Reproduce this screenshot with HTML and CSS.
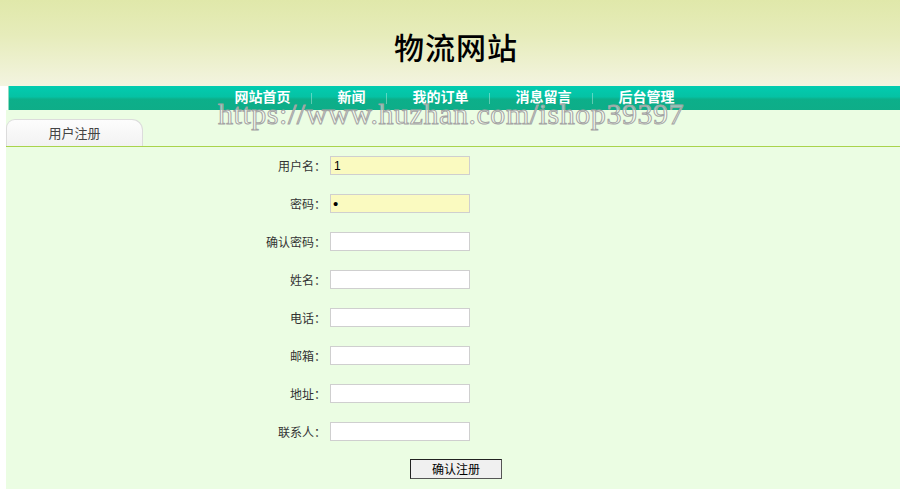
FILE: index.html
```html
<!DOCTYPE html>
<html lang="zh-CN">
<head>
    <meta charset="UTF-8">
    <title>物流网站 - 用户注册</title>
    <link rel="stylesheet" href="styles.css">
</head>
<body>
    <div class="header">
        <h1 class="site-title">物流网站</h1>
    </div>

    <div class="nav">
        <a href="#">网站首页</a>
        <span class="sep"></span>
        <a href="#">新闻</a>
        <span class="sep"></span>
        <a href="#">我的订单</a>
        <span class="sep"></span>
        <a href="#">消息留言</a>
        <span class="sep"></span>
        <a href="#">后台管理</a>
    </div>

    <div class="main">
        <div class="tab-bar">
            <div class="tab">用户注册</div>
        </div>

        <form class="reg-form">
            <label>用户名：</label>
            <input type="text" class="filled" value="1">
            <label>密码：</label>
            <input type="password" class="filled" value="1">
            <label>确认密码：</label>
            <input type="password">
            <label>姓名：</label>
            <input type="text">
            <label>电话：</label>
            <input type="text">
            <label>邮箱：</label>
            <input type="text">
            <label>地址：</label>
            <input type="text">
            <label>联系人：</label>
            <input type="text">
            <span></span>
            <button type="button" class="submit-btn">确认注册</button>
        </form>
    </div>

    <div class="watermark">https://www.huzhan.com/ishop39397</div>
</body>
</html>
```

FILE: styles.css
```css
body {
    margin: 0;
    padding: 0;
    background: #fff;
    font-family: "Noto Sans CJK SC", "Liberation Sans", sans-serif;
    font-size: 12px;
    color: #333;
    height: 489px;
    overflow: hidden;
    display: flex;
    flex-direction: column;
}

.header {
    height: 86px;
    background: linear-gradient(180deg, #e0e8aa 0%, #e6ecba 40%, #f3f4e0 100%);
    display: flex;
    align-items: center;
    justify-content: center;
}
.site-title {
    margin: 6px 0 0 12px;
    font-size: 30px;
    font-weight: 500;
    color: #000;
    letter-spacing: 1px;
}

.nav {
    margin-left: 8px;
    height: 24px;
    background: linear-gradient(180deg, #02ccb0 0%, #05c2a4 45%, #0caf8a 55%, #0ead88 100%);
    border-left: 1px solid #8fdcc0;
    display: flex;
    align-items: center;
    justify-content: center;
}
.nav a {
    color: #fff;
    font-size: 14px;
    font-weight: bold;
    text-decoration: none;
    line-height: 24px;
    margin-top: -4px;
}
.nav .sep {
    width: 1px;
    height: 11px;
    background: rgba(255, 255, 255, 0.35);
    margin: 0 26px 0 20px;
}

.main {
    flex: 1;
    margin-left: 6px;
    background: #ebfde3;
    padding-top: 9px;
}
.tab-bar {
    border-bottom: 1px solid #a9d44c;
    display: flex;
}
.tab {
    width: 135px;
    height: 26px;
    line-height: 26px;
    text-align: center;
    font-size: 13px;
    color: #444;
    background: linear-gradient(180deg, #fdfdfd 0%, #f2f2f2 100%);
    border: 1px solid #dcdcdc;
    border-bottom: none;
    border-radius: 9px 11px 0 0;
}

.reg-form {
    display: grid;
    grid-template-columns: 320px 140px;
    column-gap: 4px;
    row-gap: 19px;
    padding-top: 9px;
}
.reg-form label {
    text-align: right;
    line-height: 19px;
    color: #333;
}
.reg-form input {
    box-sizing: border-box;
    width: 140px;
    height: 19px;
    margin: 0;
    padding: 0 3px;
    border: 1px solid #cfcfcf;
    background: #fff;
    font-size: 12px;
    font-family: "Liberation Sans", sans-serif;
    color: #000;
}
.reg-form input[type="password"] {
    font-size: 15px;
    padding-left: 2px;
}
.reg-form input.filled {
    background: #fafac0;
}
.submit-btn {
    margin: -1px 0 0 80px;
    width: 92px;
    height: 20px;
    padding: 0;
    background: #f0f0f0;
    border: 1px solid #222;
    border-right-color: #555;
    border-bottom-color: #555;
    font-family: "Noto Sans CJK SC", sans-serif;
    font-size: 12px;
    line-height: 16px;
    color: #000;
}

.watermark {
    position: absolute;
    top: 97px;
    left: 218px;
    font-family: "Liberation Serif", serif;
    font-size: 30px;
    letter-spacing: 0.55px;
    color: rgba(255, 255, 255, 0.5);
    -webkit-text-stroke: 1px #a4a4a4;
    pointer-events: none;
    white-space: nowrap;
}
```
